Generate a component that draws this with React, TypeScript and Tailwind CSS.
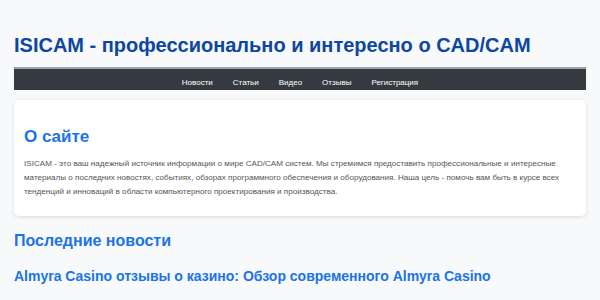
export default function App() {
  const links = ["Новости", "Статьи", "Видео", "Отзывы", "Регистрация"];

  return (
    <div
      className="min-h-screen bg-[#f8f9fa] px-[14px]"
      style={{ fontFamily: '"Liberation Sans", Arial, sans-serif' }}
    >
      {/* Header */}
      <header className="pt-[31px]">
        <h1 className="text-[20px] font-bold leading-[28px] text-[#0d47a1]">
          ISICAM - профессионально и интересно о CAD/CAM
        </h1>
        <nav className="mt-[8px] h-[23px] bg-[#343a40] border-t-2 border-[#9ea3a8] flex items-center justify-center">
          <ul className="flex">
            {links.map((item) => (
              <li key={item} className="px-[10px]">
                <a href="#" className="text-[8px] text-white">
                  {item}
                </a>
              </li>
            ))}
          </ul>
        </nav>
      </header>

      {/* About */}
      <section className="mt-[10px] bg-white rounded-[5px] shadow-[0_1px_4px_rgba(0,0,0,0.12)] px-[10px] pt-[26px] pb-[17px]">
        <h2 className="text-[17px] font-bold leading-[22px] text-[#1a73e8]">О сайте</h2>
        <p className="mt-[9px] text-[8.1px] leading-[14px] text-[#555]">
          ISICAM - это ваш надежный источник информации о мире CAD/CAM систем. Мы стремимся предоставить профессиональные и интересные материалы о последних новостях, событиях, обзорах программного обеспечения и оборудования. Наша цель - помочь вам быть в курсе всех тенденций и инноваций в области компьютерного проектирования и производства.
        </p>
      </section>

      {/* News */}
      <section className="mt-[15px]">
        <h2 className="text-[16px] font-bold leading-[20px] text-[#1a73e8]">Последние новости</h2>
        <h3 className="mt-[17px] text-[14px] font-bold leading-[16px] text-[#1a73e8]">
          Almyra Casino отзывы о казино: Обзор современного Almyra Casino
        </h3>
      </section>
    </div>
  );
}
